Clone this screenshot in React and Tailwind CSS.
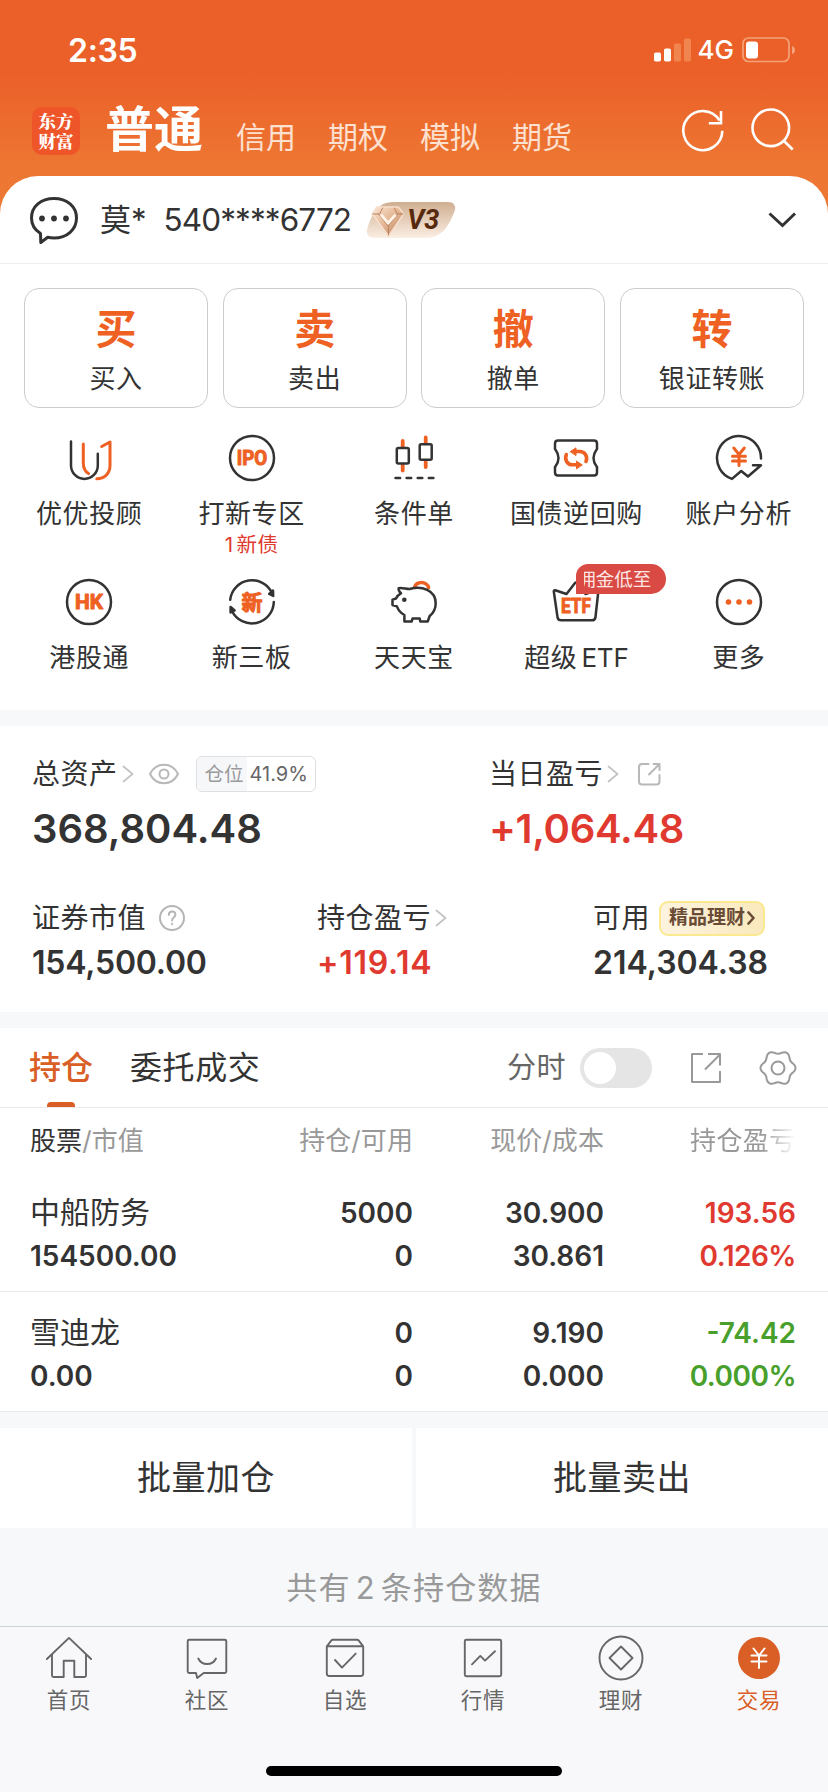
import clsx from 'clsx'

const TABS = ['信用', '期权', '模拟', '期货']

const ACTIONS = [
  { glyph: '买', label: '买入' },
  { glyph: '卖', label: '卖出' },
  { glyph: '撤', label: '撤单' },
  { glyph: '转', label: '银证转账' }
]

const HOLDINGS = [
  { name: '中船防务', value: '154500.00', qty: '5000', free: '0', price: '30.900', cost: '30.861', pnl: '193.56', pct: '0.126%', up: true },
  { name: '雪迪龙', value: '0.00', qty: '0', free: '0', price: '9.190', cost: '0.000', pnl: '-74.42', pct: '0.000%', up: false }
]

const ORANGE = '#ee6123'
const DARK = '#333333'

// six-toothed wavy outline for the settings icon
const GEAR_POINTS = Array.from({ length: 120 }, (_, i) => {
  const a = (i / 120) * Math.PI * 2
  const r = 15.9 + 1.6 * Math.cos(6 * a)
  return `${(19 + r * Math.cos(a)).toFixed(2)},${(19 + r * Math.sin(a)).toFixed(2)}`
}).join(' ')

const Svg = ({ children, className = 'w-12 h-12', viewBox = '0 0 48 48', ...rest }) => (
  <svg className={clsx('block shrink-0', className)} viewBox={viewBox} fill="none" strokeLinecap="round" strokeLinejoin="round" {...rest}>
    {children}
  </svg>
)

const MenuIcon = ({ children }) => <Svg stroke={DARK} strokeWidth="2.5">{children}</Svg>
const NavIcon = ({ children }) => <Svg stroke="#666" strokeWidth="1.9">{children}</Svg>

const IconText = ({ children, y, size, width }) => (
  <text
    x="24"
    y={y}
    fill={ORANGE}
    stroke={ORANGE}
    strokeWidth="1"
    fontSize={size}
    fontWeight="700"
    textAnchor="middle"
    textLength={width}
    lengthAdjust="spacingAndGlyphs"
    fontFamily="Roboto, 'Noto Sans CJK SC', sans-serif"
  >
    {children}
  </text>
)

const MENU = [
  {
    label: '优优投顾',
    icon: (
      <MenuIcon>
        <path d="M6 7.5V31.5a13.4 13.4 0 0 0 26.8 0V19.7" />
        <path d="M18.3 10V29c0 5 2 8.500 5.200 10.600" stroke={ORANGE} strokeWidth="3" />
        <path d="M36.700 12.500 45 8V31.500c0 8-5.500 13.200-13.200 13.200" stroke={ORANGE} strokeWidth="3" />
      </MenuIcon>
    )
  },
  {
    label: '打新专区',
    note: '新债',
    count: 1,
    icon: (
      <MenuIcon>
        <circle cx="24" cy="24" r="22" />
        <IconText y="31" size="19.500" width="30.500">IPO</IconText>
      </MenuIcon>
    )
  },
  {
    label: '条件单',
    icon: (
      <MenuIcon>
        <path d="M12.700 7v6M12.700 31v5.500M35.700 3.500v5.500M35.700 28v5" stroke={ORANGE} strokeWidth="3.800" />
        <rect x="6.800" y="14" width="12" height="15.600" rx="1.500" />
        <rect x="29.700" y="10.200" width="12" height="15.600" rx="1.500" />
        <path d="M5.500 44h4.600M16.600 44h4.600M27.700 44h4.600M38.800 44h4.600" />
      </MenuIcon>
    )
  },
  {
    label: '国债逆回购',
    icon: (
      <MenuIcon>
        <path d="M6 6.500H42q3 0 3 3v5.500c-1 1.500-3.500 4-3.500 9s2.500 7.500 3.500 9v5.500q0 3-3 3H6q-3 0-3-3v-5.500c1-1.500 3.500-4 3.500-9s-2.500-7.500-3.500-9v-5.500q0-3 3-3z" />
        <g stroke={ORANGE} strokeWidth="3.600">
          <path d="M14.300 20.500C12.300 26 15.500 30.800 20.500 30.800H25" />
          <path d="M34 27.500C36 22 32.800 17.500 27.500 17.500H23.500" />
        </g>
        <path d="M18.500 17.500l5.500-3.700v7.400zM30 30.800l-5.500-3.700v7.400z" fill={ORANGE} stroke={ORANGE} strokeWidth="1" />
      </MenuIcon>
    )
  },
  {
    label: '账户分析',
    icon: (
      <MenuIcon>
        <path d="M46 24.500A22 22 0 1 0 17 44.900L26.200 37l6.800 5.500L46 31.200h-8" />
        <path d="M18.800 14 24 20.500 29.300 14M17.500 22.300h13M17.500 27h13M24 21v10.500" stroke={ORANGE} strokeWidth="3" />
      </MenuIcon>
    )
  },
  {
    label: '港股通',
    icon: (
      <MenuIcon>
        <circle cx="24" cy="24" r="22" />
        <IconText y="31" size="20" width="28">HK</IconText>
      </MenuIcon>
    )
  },
  {
    label: '新三板',
    icon: (
      <MenuIcon>
        <path d="M2.200 21.800A22 22 0 0 1 44 15" />
        <path d="M45.800 24A22 22 0 0 1 4 33" />
        <path d="M45 12.500 45.200 18l-4-2z" fill={DARK} />
        <path d="M2.600 34.500v-5.500l4 3.500z" fill={DARK} />
        <IconText y="31.800" size="21" width="21">新</IconText>
      </MenuIcon>
    )
  },
  {
    label: '天天宝',
    icon: (
      <MenuIcon>
        <path d="M24.500 9.500c1-3.500 4-5 7-5s6.500 2 7 5" stroke={ORANGE} strokeWidth="3.600" />
        <path d="M8.700 10.200c4-.8 7.500 1 11 .8 12-3.500 26 1 26 14.300 0 5-2.200 9.700-6 12.700l-2 5.500H30.300l-.6-3H22.600l-1 3H14.400V37c-4-2-6-4.600-7.500-8.600L2.500 27v-5.400L6 20.500c1-2.500 2.500-4 5-5.200C9 13.500 8.400 12 8.700 10.200z" />
        <circle cx="14.300" cy="21.800" r="2.300" fill={DARK} stroke="none" />
      </MenuIcon>
    )
  },
  {
    label: '超级',
    suffix: 'ETF',
    badge: '佣金低至',
    icon: (
      <MenuIcon>
        <path d="M3.200 12.200 14.500 16 23 5q1-1 2 0l8.500 11 11.300-3.800q1.800-.2 1.500 1.500L43.500 39q-.4 3.300-3.500 3.300H9q-3.100 0-3.500-3.300L1.800 13.500q0-1.500 1.400-1.300z" />
        <IconText y="35" size="20" width="30">ETF</IconText>
      </MenuIcon>
    )
  },
  {
    label: '更多',
    icon: (
      <MenuIcon>
        <circle cx="24" cy="24" r="22" />
        <g fill={ORANGE} stroke="none">
          <circle cx="13.500" cy="24" r="2.800" />
          <circle cx="24" cy="24" r="2.800" />
          <circle cx="34.500" cy="24" r="2.800" />
        </g>
      </MenuIcon>
    )
  }
]

const NAV = [
  {
    label: '首页',
    icon: (
      <NavIcon>
        <path d="M1.900 25 24 3.900 46.100 25" />
        <path d="M7 21v20.500q0 1.500 1.500 1.500H18.700V26.700H29.300V43h10.200q1.500 0 1.500-1.500V21" />
      </NavIcon>
    )
  },
  {
    label: '社区',
    icon: (
      <NavIcon>
        <path d="M6.200 5.800H41.800q1.500 0 1.500 1.500V37.500q0 1.500-1.500 1.500H20.700L14.200 44 13 39H6.200q-1.500 0-1.500-1.500V7.300q0-1.500 1.500-1.500z" />
        <path d="M15.300 24.500c3.500 7.300 14.200 7.300 17.700 0" />
      </NavIcon>
    )
  },
  {
    label: '自选',
    icon: (
      <NavIcon>
        <path d="M5.800 12.300H42.200V39.500q0 2.500-2.500 2.500H8.300q-2.500 0-2.500-2.500zL10 6.800q.8-1 2-1H36q1.200 0 2 1l4.200 5.500" />
        <path d="M14 26l7 7.600L34.700 19.700" />
      </NavIcon>
    )
  },
  {
    label: '行情',
    icon: (
      <NavIcon>
        <rect x="5.800" y="5.800" width="36.400" height="36.400" rx="1.500" />
        <path d="M13 30.300 21.300 21.900 26 26.600 36 17.300" />
      </NavIcon>
    )
  },
  {
    label: '理财',
    icon: (
      <NavIcon>
        <circle cx="24" cy="24" r="21.500" />
        <path d="M24 12.500 35.500 24 24 35.500 12.500 24z" />
      </NavIcon>
    )
  },
  {
    label: '交易',
    active: true,
    icon: (
      <Svg stroke="#fff" strokeWidth="2">
        <circle cx="24" cy="24" r="21" fill="#d95f26" stroke="none" />
        <path d="M18.500 14.500 24 21.500 29.500 14.500M16.500 21.500h15M16.500 27.500h15M24 21.500V34" />
      </Svg>
    )
  }
]

const Chevron = ({ className }) => (
  <Svg className={clsx('w-3 h-[18px]', className)} viewBox="0 0 12 18" stroke="#c4c4c4" strokeWidth="1.8">
    <path d="M1.500 1.500 10.500 9 1.500 16.500" />
  </Svg>
)

const StatusBar = () => (
  <div className="flex justify-between items-center h-[98px] pt-px pl-[68px] pr-8 text-white">
    <div className="text-[32px] font-semibold -tracking-[0.3px] pt-0.5">2:35</div>
    <div className="flex items-center">
      <Svg className="w-[38px] h-6" viewBox="0 0 38 24">
        <rect x="0" y="14.500" width="7" height="9" rx="1.800" fill="#fff" />
        <rect x="10" y="10.500" width="7" height="13" rx="1.800" fill="#fff" />
        <rect x="20" y="5.500" width="7" height="18" rx="1.800" fill="#f18550" />
        <rect x="30" y="0.500" width="7" height="23" rx="1.800" fill="#f18550" />
      </Svg>
      <span className="ml-1.5 pt-px text-[26px] font-medium leading-6">4G</span>
      <Svg className="ml-2 w-[54px] h-[26px]" viewBox="0 0 54 26">
        <rect x="1" y="1" width="46" height="23.500" rx="5.500" stroke="#f4a27a" strokeWidth="1.700" />
        <rect x="4" y="4.500" width="12" height="17" rx="3" fill="#fff" />
        <path d="M50 9q3 1 3 4t-3 4z" fill="#f4a27a" />
      </Svg>
    </div>
  </div>
)

const Header = () => (
  <div className="flex items-center h-[78px] pl-8 pr-[33px] text-white">
    <div className="flex flex-col items-center gap-px w-12 h-12 pt-1 -mt-[13px] rounded-[10px] bg-[#ee5529] text-[17.5px] leading-[19px] font-black font-['Noto_Serif_CJK_SC','Noto_Sans_CJK_SC',serif]">
      <div className="h-[19px]">东方</div>
      <div className="h-[19px]">财富</div>
    </div>
    <h1 className="ml-[25px] -mt-[15px] text-[49px] leading-[60px] font-bold">普通</h1>
    <div className="flex gap-8 ml-[33px] text-[30px] leading-10 text-[#fce0d0]">
      {TABS.map(tab => <span key={tab}>{tab}</span>)}
    </div>
    <Svg className="ml-auto -mt-[14px] w-12 h-12" stroke="#fff" strokeWidth="2.600" strokeLinecap="butt" strokeLinejoin="miter">
      <path d="M43.300 24.700A19.500 19.500 0 1 1 40.500 14.500" />
      <path d="M29.800 17.300H42V5" />
    </Svg>
    <Svg className="ml-5 -mt-[14px] w-12 h-12" stroke="#fff" strokeWidth="2.600" strokeLinecap="butt">
      <circle cx="23.800" cy="21.800" r="18.300" />
      <path d="M36.500 34.500 45.700 43.500" />
    </Svg>
  </div>
)

const LevelBadge = () => (
  <div className="relative ml-[15px] w-[90px] h-9">
    <Svg className="w-[90px] h-9" viewBox="0 0 92 36" preserveAspectRatio="none">
      <defs>
        <linearGradient id="badge" x1="0" y1="0" x2="0" y2="1">
          <stop offset="0" stopColor="#cfae90" />
          <stop offset="1" stopColor="#fbeee3" />
        </linearGradient>
        <linearGradient id="gem" x1="0" y1="0" x2="1" y2="1">
          <stop offset="0" stopColor="#fbe6d4" />
          <stop offset="0.500" stopColor="#e3b592" />
          <stop offset="1" stopColor="#b97f5a" />
        </linearGradient>
      </defs>
      <path d="M28 0H84q8 0 7 8C88 16 84 24 79 29Q72 36 62 36H8Q0 35 1 28C5 15 10 0 28 0z" fill="url(#badge)" />
      <path d="M11 5H33L38.500 12 23 34 6.500 12z" fill="url(#gem)" stroke="#f8dfcd" strokeWidth="1.500" />
      <path d="M13 12 22.500 24 32.500 12M7 12h7l3-6M38 12h-6l-3-6M23 33v-9" stroke="#b98361" strokeWidth="1" />
      <path d="M16 13.500 22.600 21 29.500 13.500" stroke="#fff2e6" strokeWidth="3" />
    </Svg>
    <span className="absolute left-[41px] top-1 text-[27px] leading-7 font-bold italic text-[#57290d] font-[Roboto,sans-serif]">V3</span>
  </div>
)

const Account = () => (
  <div className="flex items-center h-[88px] pl-[29px] pr-[31px] border-b border-[#eeeeee]">
    <Svg className="w-[50px] h-[50px]" viewBox="0 0 50 50" stroke={DARK} strokeWidth="3">
      <path d="M11.500 38.500C5 34.500 2.500 29 2.500 23 2.500 11.500 12 3.500 25 3.500S47.500 11.500 47.500 23 38 43 25 43q-3.500 0-6.300-.7L11.800 47.500z" />
      <g fill={DARK} stroke="none">
        <circle cx="13" cy="23.500" r="2.900" />
        <circle cx="25" cy="23.500" r="2.900" />
        <circle cx="37" cy="23.500" r="2.900" />
      </g>
    </Svg>
    <span className="ml-[21px] text-[31px] leading-10">莫*</span>
    <span className="ml-[17px] text-[31.5px] leading-10 -tracking-[0.9px]">540****6772</span>
    <LevelBadge />
    <Svg className="ml-auto w-[30px] h-[18px]" viewBox="0 0 30 18" stroke={DARK} strokeWidth="3" strokeLinecap="butt" strokeLinejoin="miter">
      <path d="M2.500 2.500 15.500 14.500 28 2.500" />
    </Svg>
  </div>
)

const MenuItem = ({ item }) => (
  <div className="relative flex flex-col items-center h-36">
    {item.icon}
    <span className="mt-[15px] text-[26px] leading-[34px] tracking-[0.6px]">
      {item.label}
      {item.suffix && <span className="ml-1 -tracking-[0.2px]">{item.suffix}</span>}
    </span>
    {item.note && (
      <span className="mt-0.5 text-[20.5px] leading-6 tracking-[0.5px] text-[#e03a30]">
        <span className="mr-[3px]">{item.count}</span>
        {item.note}
      </span>
    )}
    {item.badge && (
      <div className="absolute left-[81px] -top-[14px] w-[90px] h-[30px] pl-2 rounded-[15px] rounded-tl-xl rounded-bl-none bg-[#d84a43]">
        <div className="overflow-hidden w-[68px]">
          <span className="block -ml-[7px] text-[18.5px] leading-[30px] text-[#fde6e4] whitespace-nowrap">{item.badge}</span>
        </div>
      </div>
    )}
  </div>
)

const Assets = () => (
  <section className="h-[286px] pt-7 bg-white">
    <div className="grid grid-cols-[457px_1fr] pl-8">
      <div>
        <div className="flex items-center h-10">
          <span className="text-[28px] tracking-[0.5px]">总资产</span>
          <Chevron className="ml-1" />
          <Svg className="ml-[14px] w-8 h-[22px]" viewBox="0 0 32 22" stroke="#b8b8b8" strokeWidth="2">
            <path d="M2 11C8-1.300 24-1.300 30 11 24 23.300 8 23.300 2 11z" />
            <circle cx="16" cy="11" r="4.500" />
          </Svg>
          <div className="flex ml-4 h-9 rounded-md border border-[#dedfe2] overflow-hidden text-[19.5px] leading-[34px]">
            <span className="w-[50px] pl-2 bg-[#f6f7f9] text-[#999999]">仓位</span>
            <span className="w-[68px] pl-[3px] text-[#666666] text-[20px]">41.9%</span>
          </div>
        </div>
        <div className="mt-3 text-[40px] leading-[46px] font-semibold">368,804.48</div>
      </div>
      <div>
        <div className="flex items-center h-10">
          <span className="text-[28px] tracking-[0.5px]">当日盈亏</span>
          <Chevron className="ml-1" />
          <Svg className="ml-[18px] w-6 h-6" viewBox="0 0 24 24" stroke="#b8b8b8" strokeWidth="2">
            <path d="M11.500 2H5Q2 2 2 5V19.500Q2 22.500 5 22.500H19.500Q22.500 22.500 22.500 19.500V13" />
            <path d="M12 12.500 22.300 2.200M16.500 2h6v6" />
          </Svg>
        </div>
        <div className="mt-3 text-[40px] leading-[46px] font-semibold -tracking-[0.3px] text-[#e03a30]">+1,064.48</div>
      </div>
    </div>
    <div className="grid grid-cols-[285px_276px_1fr] mt-[46px] pl-8">
      <div>
        <div className="flex items-center h-10">
          <span className="text-[28px] tracking-[0.5px]">证券市值</span>
          <Svg className="ml-3 w-7 h-7" viewBox="0 0 28 28" stroke="#b5b5b5" strokeWidth="2">
            <circle cx="14" cy="14" r="12" />
            <path d="M10.800 11q0-3.500 3.300-3.500t3.300 3.200c0 2.500-3.300 2.700-3.300 5.800M14.100 19.800v.4" />
          </Svg>
        </div>
        <div className="mt-[5px] text-[32px] leading-10 font-semibold -tracking-[0.2px]">154,500.00</div>
      </div>
      <div>
        <div className="flex items-center h-10">
          <span className="text-[28px] tracking-[0.5px]">持仓盈亏</span>
          <Chevron className="ml-1" />
        </div>
        <div className="mt-[5px] text-[32px] leading-10 font-semibold tracking-[0.7px] text-[#e03a30]">+119.14</div>
      </div>
      <div>
        <div className="flex items-center h-10">
          <span className="text-[28px] tracking-[0.5px]">可用</span>
          <div className="flex items-center justify-center ml-[9px] w-[106px] h-[35px] rounded-[9px] border-2 border-[#fbe98f] bg-linear-to-r from-[#fdf3df] to-[#fae9bd] text-[19px] font-bold text-[#694a35]">
            精品理财
            <Svg className="ml-0.5 w-2 h-3.5" viewBox="0 0 8 14" stroke="#694a35" strokeWidth="2.600">
              <path d="M1.500 1.500 6.500 7 1.500 12.500" />
            </Svg>
          </div>
        </div>
        <div className="mt-[5px] text-[32px] leading-10 font-semibold">214,304.38</div>
      </div>
    </div>
  </section>
)

const HoldingRow = ({ item }) => {
  const tone = item.up ? 'text-[#e03a30]' : 'text-[#489f2c]'
  return (
    <div className="grid grid-cols-[192px_191px_191px_192px] h-[120px] pl-[30px] pt-5 border-b border-[#e9eaec] text-[28px] leading-[43px] font-semibold text-right">
      <div className="text-left">
        <div className="-mt-px mb-px text-[30px] font-normal">{item.name}</div>
        <div>{item.value}</div>
      </div>
      <div>
        <div>{item.qty}</div>
        <div>{item.free}</div>
      </div>
      <div>
        <div>{item.price}</div>
        <div>{item.cost}</div>
      </div>
      <div className={tone}>
        <div>{item.pnl}</div>
        <div className="-tracking-[0.5px]">{item.pct}</div>
      </div>
    </div>
  )
}

const Positions = () => (
  <section className="bg-white">
    <div className="flex items-center h-20 pl-[29px] pr-[31px] border-b border-[#e9eaec]">
      <div className="flex flex-col items-center h-full w-[64px] pt-5 text-[32px] leading-10 font-medium text-[#d95f26]">
        持仓
        <div className="mt-auto w-7 h-[5px] rounded-t bg-[#d95f26]" />
      </div>
      <span className="ml-[37px] pt-px text-[32px] leading-10 tracking-[0.6px]">委托成交</span>
      <span className="ml-auto pt-px text-[29px] tracking-[0.5px] text-[#666666]">分时</span>
      <div className="ml-[14px] w-18 h-10 p-1 rounded-full bg-[#e5e5e5]">
        <div className="w-8 h-8 rounded-full bg-white" />
      </div>
      <Svg className="ml-[38px] w-8 h-8" viewBox="0 0 32 32" stroke="#999" strokeWidth="2" strokeLinecap="butt">
        <path d="M13 2H2V30H30V19" />
        <path d="M15 17.500 30 2.500M18 2H30V13.500" />
      </Svg>
      <Svg className="ml-[37px] w-[38px] h-[38px]" viewBox="0 0 38 38" stroke="#999" strokeWidth="2">
        <polygon points={GEAR_POINTS} />
        <circle cx="19" cy="19" r="6.500" />
      </Svg>
    </div>
    <div className="grid grid-cols-[192px_191px_191px_192px] h-16 pl-[30px] items-center text-[26px] tracking-[0.1px] text-right text-[#999999]">
      <div className="text-left"><span className="text-[#333333]">股票</span>/市值</div>
      <div>持仓/可用</div>
      <div>现价/成本</div>
      <div className="pl-[86px] text-left tracking-[0.4px] whitespace-nowrap mask-[linear-gradient(to_right,#000_82%,transparent_100%)]">持仓盈亏</div>
    </div>
    {HOLDINGS.map(item => <HoldingRow key={item.name} item={item} />)}
  </section>
)

const App = () => {
  return (
    <div className="flex flex-col w-[828px] h-[1792px] overflow-hidden bg-[#f6f8fa] text-[#333333] font-[Inter,'Noto_Sans_CJK_SC',sans-serif]">
      <div className="bg-[linear-gradient(to_bottom,#eb6029_0px,#eb6029_75px,#ed7532_160px,#ed7a35_220px)]">
        <StatusBar />
        <Header />
        <section className="h-[534px] rounded-t-[38px] bg-white">
          <Account />
          <div className="grid grid-cols-4 gap-[14.67px] px-6 mt-6">
            {ACTIONS.map(action => (
              <div key={action.label} className="flex flex-col items-center h-[120px] pt-[17px] rounded-[15px] border border-[#cccccc]">
                <span className="text-[41px] leading-[46px] font-bold text-[#ee6123]">{action.glyph}</span>
                <span className="mt-1.5 text-[26px] leading-[42px] tracking-[0.6px]">{action.label}</span>
              </div>
            ))}
          </div>
          <div className="grid grid-cols-5 px-2 mt-[26px]">
            {MENU.map(item => <MenuItem key={item.label} item={item} />)}
          </div>
        </section>
      </div>
      <div className="mt-4">
        <Assets />
      </div>
      <div className="mt-4">
        <Positions />
      </div>
      <div className="grid grid-cols-2 gap-1 mt-4 text-[34px] leading-[100px] tracking-[0.5px] text-center">
        <div className="bg-white">批量加仓</div>
        <div className="bg-white">批量卖出</div>
      </div>
      <div className="h-[98px] pt-[38px] text-[31px] leading-11 tracking-[1.200px] text-center text-[#999999]">
        共有<span className="mx-[5px]">2</span>条持仓数据
      </div>
      <nav className="flex-1 border-t border-[#d0d2d9] bg-[#f8f8fb]">
        <div className="grid grid-cols-6 pt-[7px]">
          {NAV.map(item => (
            <div
              key={item.label}
              className={clsx('flex flex-col items-center text-[21.5px] leading-8 tracking-[0.8px]', item.active ? 'text-[#d95f26]' : 'text-[#666666]')}
            >
              {item.icon}
              <span className="mt-0.5">{item.label}</span>
            </div>
          ))}
        </div>
        <div className="w-[296px] h-2.5 mx-auto mt-[50px] rounded-full bg-black" />
      </nav>
    </div>
  )
}

export default App
